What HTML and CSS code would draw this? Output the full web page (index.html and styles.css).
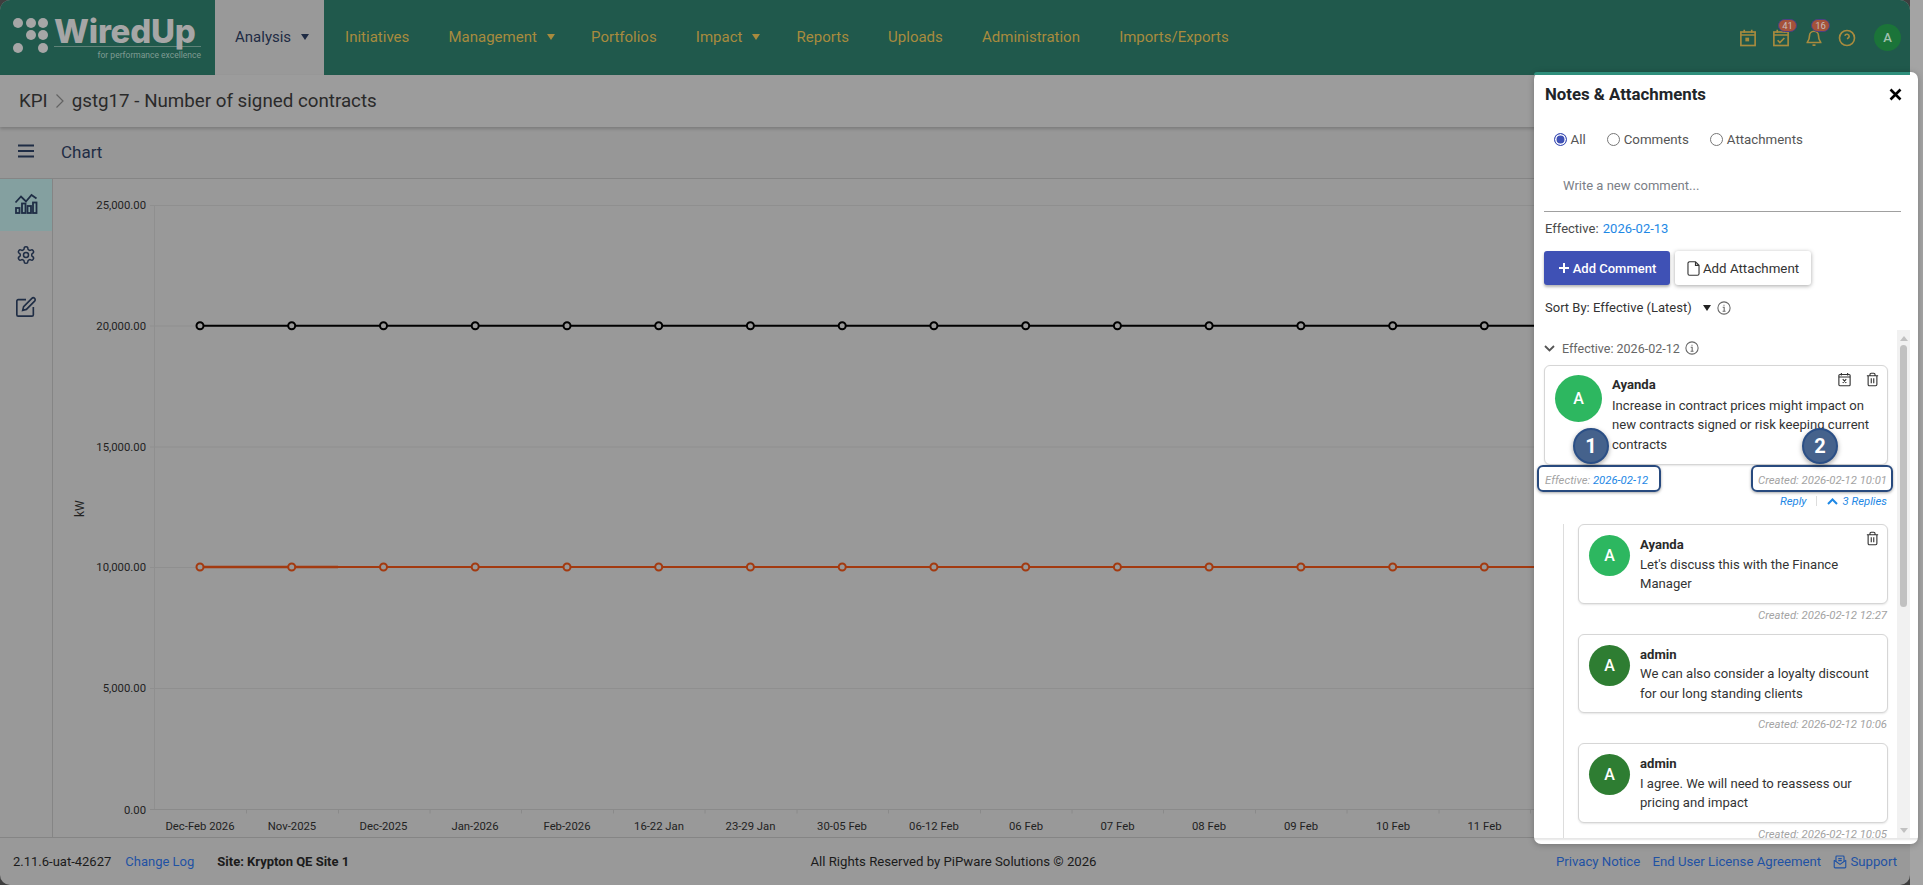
FILE: index.html
```html
<!DOCTYPE html>
<html lang="en">
<head>
<meta charset="utf-8">
<title>KPI - WiredUp</title>
<link rel="stylesheet" href="styles.css">
</head>
<body>
<svg class="defs" width="0" height="0" aria-hidden="true">
  <symbol id="i-trash" viewBox="0 0 24 24"><path d="M3 6h18M19 6v14a2 2 0 0 1-2 2H7a2 2 0 0 1-2-2V6M8 6V4a2 2 0 0 1 2-2h4a2 2 0 0 1 2 2v2M10 10v8M14 10v8"/></symbol>
  <symbol id="i-calx" viewBox="0 0 24 24"><rect x="3" y="4" width="18" height="18" rx="1.5"/><path d="M7 1.5v4M17 1.5v4M3 8h18M9.2 11.5l5.6 6M14.8 11.5l-5.6 6"/></symbol>
  <symbol id="i-info" viewBox="0 0 24 24"><circle cx="12" cy="12" r="10.5"/><path d="M12 6.4v1.8M9.8 10.6H12.3V17M9.6 17.4h5" /></symbol>
</svg>
<div class="screen">
  <div class="frame">
    <div class="app">
      <header class="nav">
        <a class="logo">
          <svg class="logo-dots" width="40" height="40" viewBox="0 0 40 40"><circle cx="7" cy="7" r="5"/><circle cx="20" cy="7" r="5"/><circle cx="32" cy="7" r="5"/><circle cx="20" cy="19" r="5"/><circle cx="32" cy="19" r="5"/><circle cx="7" cy="32" r="5"/><circle cx="32" cy="32" r="5"/></svg>
          <div class="logo-text">
            <div class="logo-name">WiredUp</div>
            <div class="logo-tag">for performance excellence</div>
          </div>
        </a>
        <nav class="menu">
          <a class="menu-item active">Analysis<span class="caret"></span></a>
          <a class="menu-item">Initiatives</a>
          <a class="menu-item">Management<span class="caret"></span></a>
          <a class="menu-item">Portfolios</a>
          <a class="menu-item">Impact<span class="caret"></span></a>
          <a class="menu-item">Reports</a>
          <a class="menu-item">Uploads</a>
          <a class="menu-item">Administration</a>
          <a class="menu-item">Imports/Exports</a>
        </nav>
        <div class="tools">
          <span class="tool"><svg viewBox="0 0 24 24" width="18" height="18"><rect x="2.5" y="4" width="19" height="18"/><path d="M7 1v4M17 1v4M2.5 8h19"/><rect class="solid" x="8.5" y="11.5" width="5" height="5"/></svg></span>
          <span class="tool"><svg viewBox="0 0 24 24" width="18" height="18"><rect x="2.5" y="4" width="19" height="18"/><path d="M7 1v4M17 1v4M2.5 8h19M7.5 15l3 3 6-6"/></svg><b class="badge">41</b></span>
          <span class="tool"><svg viewBox="0 0 24 24" width="18" height="18"><path d="M6 9a6 6 0 0 1 12 0c0 6 3 8 3 9H3c0-1 3-3 3-9M10 21.5h4"/></svg><b class="badge">16</b></span>
          <span class="tool"><svg viewBox="0 0 24 24" width="18" height="18"><circle cx="12" cy="12" r="10"/><path d="M9.09 9a3 3 0 0 1 5.83 1c0 2-3 3-3 3M12 17h.01"/></svg></span>
          <span class="user">A</span>
        </div>
      </header>

      <div class="crumbs">
        <span>KPI</span>
        <svg class="crumb-sep" width="10" height="16" viewBox="0 0 10 16"><path d="M1.5 1.5 8 8l-6.5 6.5"/></svg>
        <span>gstg17 - Number of signed contracts</span>
      </div>

      <div class="subbar">
        <svg class="burger" width="18" height="14" viewBox="0 0 18 14"><path d="M1 1.5h16M1 7h16M1 12.500h16"/></svg>
        <span class="subbar-title">Chart</span>
      </div>

      <div class="workspace">
        <aside class="side">
          <a class="side-item active"><svg viewBox="0 0 24 24" width="24" height="24"><path d="M1.500 11.500 7 5.500l5 5 5.500-6.500 5 3.500"/><rect x="2" y="17" width="3.500" height="5"/><rect x="8" y="12.500" width="3.500" height="9.500"/><rect x="13.500" y="15" width="3.500" height="7"/><rect x="19" y="11.500" width="3.500" height="10.500"/></svg></a>
          <a class="side-item"><svg viewBox="0 0 24 24" width="20" height="20"><path d="M12.220 2h-.44a2 2 0 0 0-2 2v.18a2 2 0 0 1-1 1.730l-.43.25a2 2 0 0 1-2 0l-.15-.08a2 2 0 0 0-2.730.73l-.22.38a2 2 0 0 0 .73 2.730l.15.1a2 2 0 0 1 1 1.720v.51a2 2 0 0 1-1 1.740l-.15.09a2 2 0 0 0-.73 2.730l.22.38a2 2 0 0 0 2.730.73l.15-.08a2 2 0 0 1 2 0l.43.25a2 2 0 0 1 1 1.730V20a2 2 0 0 0 2 2h.44a2 2 0 0 0 2-2v-.18a2 2 0 0 1 1-1.730l.43-.25a2 2 0 0 1 2 0l.15.08a2 2 0 0 0 2.730-.73l.22-.39a2 2 0 0 0-.73-2.730l-.15-.08a2 2 0 0 1-1-1.740v-.5a2 2 0 0 1 1-1.740l.15-.09a2 2 0 0 0 .73-2.730l-.22-.38a2 2 0 0 0-2.730-.73l-.15.08a2 2 0 0 1-2 0l-.43-.25a2 2 0 0 1-1-1.730V4a2 2 0 0 0-2-2z"/><circle cx="12" cy="12" r="3"/></svg></a>
          <a class="side-item"><svg viewBox="0 0 24 24" width="22" height="22"><path d="M12 4H3.500a1.500 1.500 0 0 0-1.500 1.500v15A1.500 1.500 0 0 0 3.500 22h15a1.500 1.500 0 0 0 1.500-1.500V12"/><path d="M18.400 2.600a2 2 0 0 1 3 3l-9 9-4 1 1-4z"/></svg></a>
        </aside>
        <main class="chart">
          <svg class="chart-svg" viewBox="53 179 1857 658" width="1857" height="658">
            <g class="grid">
              <path d="M150 205.500H1534M150 326H1534M150 447H1534M150 567.500H1534M150 688.500H1534"/>
              <path d="M154.500 205V809.500"/>
              <path class="axis" d="M150 809.500H1534M246.500 809.500v4M338.500 809.500v4M430 809.500v4M521.500 809.500v4M613.500 809.500v4M705 809.500v4M797 809.500v4M888.500 809.500v4M980.500 809.500v4M1072 809.500v4M1163.500 809.500v4M1255.500 809.500v4M1347 809.500v4M1439 809.500v4M1530.500 809.500v4"/>
            </g>
            <g class="y-labels">
              <text x="146" y="209">25,000.00</text>
              <text x="146" y="330">20,000.00</text>
              <text x="146" y="451">15,000.00</text>
              <text x="146" y="571">10,000.00</text>
              <text x="146" y="692">5,000.00</text>
              <text x="146" y="814">0.00</text>
            </g>
            <text class="unit" transform="translate(84 517) rotate(-90)">kW</text>
            <g class="x-labels">
              <text x="200" y="830">Dec-Feb 2026</text><text x="292" y="830">Nov-2025</text><text x="383.500" y="830">Dec-2025</text><text x="475" y="830">Jan-2026</text><text x="567" y="830">Feb-2026</text><text x="659" y="830">16-22 Jan</text><text x="750.500" y="830">23-29 Jan</text><text x="842" y="830">30-05 Feb</text><text x="934" y="830">06-12 Feb</text><text x="1026" y="830">06 Feb</text><text x="1117.500" y="830">07 Feb</text><text x="1209" y="830">08 Feb</text><text x="1301" y="830">09 Feb</text><text x="1393" y="830">10 Feb</text><text x="1484.500" y="830">11 Feb</text>
            </g>
            <path class="line-black" d="M200 325.700H1536"/>
            <g class="dots-black">
              <circle cx="200" cy="325.700" r="3.500"/><circle cx="291.700" cy="325.700" r="3.500"/><circle cx="383.500" cy="325.700" r="3.500"/><circle cx="475.200" cy="325.700" r="3.500"/><circle cx="567" cy="325.700" r="3.500"/><circle cx="658.700" cy="325.700" r="3.500"/><circle cx="750.400" cy="325.700" r="3.500"/><circle cx="842.200" cy="325.700" r="3.500"/><circle cx="933.900" cy="325.700" r="3.500"/><circle cx="1025.700" cy="325.700" r="3.500"/><circle cx="1117.400" cy="325.700" r="3.500"/><circle cx="1209.100" cy="325.700" r="3.500"/><circle cx="1300.900" cy="325.700" r="3.500"/><circle cx="1392.700" cy="325.700" r="3.500"/><circle cx="1484.300" cy="325.700" r="3.500"/>
            </g>
            <path class="line-red" d="M200 567H338"/>
            <path class="line-red thin" d="M338 567H1536"/>
            <g class="dots-red">
              <circle cx="200" cy="567" r="3.500"/><circle cx="291.700" cy="567" r="3.500"/><circle cx="383.500" cy="567" r="3.500"/><circle cx="475.200" cy="567" r="3.500"/><circle cx="567" cy="567" r="3.500"/><circle cx="658.700" cy="567" r="3.500"/><circle cx="750.400" cy="567" r="3.500"/><circle cx="842.200" cy="567" r="3.500"/><circle cx="933.900" cy="567" r="3.500"/><circle cx="1025.700" cy="567" r="3.500"/><circle cx="1117.400" cy="567" r="3.500"/><circle cx="1209.100" cy="567" r="3.500"/><circle cx="1300.900" cy="567" r="3.500"/><circle cx="1392.700" cy="567" r="3.500"/><circle cx="1484.300" cy="567" r="3.500"/>
            </g>
          </svg>
        </main>
      </div>

      <footer class="footer">
        <div class="foot-left">
          <span>2.11.6-uat-42627</span>
          <a class="foot-link">Change Log</a>
          <b>Site: Krypton QE Site 1</b>
        </div>
        <div class="foot-mid">All Rights Reserved by PiPware Solutions © 2026</div>
        <div class="foot-right">
          <a class="foot-link">Privacy Notice</a>
          <a class="foot-link">End User License Agreement</a>
          <a class="foot-link support"><svg width="14" height="15" viewBox="0 0 24 26"><path d="M2 11v11.500a1.500 1.500 0 0 0 1.500 1.500h17a1.500 1.500 0 0 0 1.500-1.500V11"/><path d="M2 11l10 7 10-7"/><path d="M5 13V5a1.500 1.500 0 0 1 1.500-1.500h11A1.500 1.500 0 0 1 19 5v8M9 8h6M9 11.500h6"/></svg>Support</a>
        </div>
      </footer>
    </div>
  </div>
  <div class="strip"></div>
</div>

<section class="panel">
  <div class="accent"></div>
  <div class="panel-head">
    <h2 class="panel-title">Notes &amp; Attachments</h2>
    <svg class="close" width="13" height="13" viewBox="0 0 13 13"><path d="M1.500 1.500l10 10M11.500 1.500l-10 10"/></svg>
  </div>
  <div class="radios">
    <label class="radio"><span class="dot on"></span>All</label>
    <label class="radio"><span class="dot"></span>Comments</label>
    <label class="radio"><span class="dot"></span>Attachments</label>
  </div>
  <div class="new-comment">Write a new comment...</div>
  <div class="effective">Effective: <a class="date gap">2026-02-13</a></div>
  <div class="buttons">
    <a class="btn primary"><svg width="12" height="12" viewBox="0 0 12 12"><path d="M6 1v10M1 6h10"/></svg>Add Comment</a>
    <a class="btn plain"><svg width="13" height="15" viewBox="0 0 16 19"><path d="M10.500 1H3a2 2 0 0 0-2 2v13a2 2 0 0 0 2 2h10a2 2 0 0 0 2-2V5.500zM10.500 1v4.500H15"/></svg>Add Attachment</a>
  </div>
  <div class="sort">
    <span>Sort By: Effective (Latest)</span>
    <span class="sort-caret"></span>
    <svg class="ico info"><use href="#i-info"/></svg>
  </div>
  <div class="list-wrap">
    <div class="list">
      <div class="group-head">
        <svg class="chev" width="11" height="7" viewBox="0 0 11 7"><path d="M1 1l4.500 4.500L10 1"/></svg>
        <span>Effective: 2026-02-12</span>
        <svg class="ico info small"><use href="#i-info"/></svg>
      </div>
      <article class="card">
        <span class="avatar big light">A</span>
        <div class="card-body">
          <div class="name">Ayanda</div>
          <div class="text">Increase in contract prices might impact on new contracts signed or risk keeping current contracts</div>
        </div>
        <div class="card-actions">
          <svg class="ico"><use href="#i-calx"/></svg>
          <svg class="ico"><use href="#i-trash"/></svg>
        </div>
      </article>
      <div class="meta">
        <span>Effective: <a class="date">2026-02-12</a></span>
        <span>Created: 2026-02-12 10:01</span>
      </div>
      <div class="reply-row">
        <a class="date">Reply</a>
        <span class="reply-sep"></span>
        <svg class="chev up" width="11" height="7" viewBox="0 0 11 7"><path d="M1 6l4.500-4.500L10 6"/></svg>
        <a class="date">3 Replies</a>
      </div>
      <div class="thread">
        <article class="card small">
          <span class="avatar light">A</span>
          <div class="card-body">
            <div class="name">Ayanda</div>
            <div class="text">Let's discuss this with the Finance Manager</div>
          </div>
          <div class="card-actions"><svg class="ico"><use href="#i-trash"/></svg></div>
        </article>
        <div class="created">Created: 2026-02-12 12:27</div>
        <article class="card small">
          <span class="avatar dark">A</span>
          <div class="card-body">
            <div class="name">admin</div>
            <div class="text">We can also consider a loyalty discount for our long standing clients</div>
          </div>
        </article>
        <div class="created">Created: 2026-02-12 10:06</div>
        <article class="card small">
          <span class="avatar dark">A</span>
          <div class="card-body">
            <div class="name">admin</div>
            <div class="text">I agree. We will need to reassess our pricing and impact</div>
          </div>
        </article>
        <div class="created">Created: 2026-02-12 10:05</div>
      </div>
      <div class="mark-box one"></div>
      <div class="mark-box two"></div>
      <span class="marker one">1</span>
      <span class="marker two">2</span>
    </div>
    <div class="scrollbar">
      <span class="arrow-up"></span>
      <span class="thumb"></span>
      <span class="arrow-down"></span>
    </div>
  </div>
  <div class="panel-foot"></div>
</section>
</body>
</html>
```

FILE: styles.css
```css
* { box-sizing: border-box; }
html, body { margin: 0; height: 885px; overflow: hidden; }
body { font-family: Roboto, "Liberation Sans", sans-serif; font-size: 13px; color: #222; background: #a4a4a4; position: relative; }
.defs { position: absolute; }
a { text-decoration: none; }
svg { fill: none; stroke: currentColor; display: block; }

.screen { display: flex; width: 1923px; height: 885px; }
.frame { flex: 0 0 1910px; background: #3e3e3e; }
.strip { flex: 1; background: #a4a4a4; }
.app { height: 885px; display: flex; flex-direction: column; background: #999; border-radius: 10px; overflow: hidden; }

/* Top navigation */
.nav { height: 75px; flex: none; display: flex; background: #20594c; }
.logo { width: 215px; flex: none; display: flex; padding: 16px 0 0 11px; color: #a6a6a6; }
.logo-dots { fill: #a6a6a6; stroke: none; width: 40px; height: 40px; flex: none; }
.logo-text { margin-left: 3px; width: 147px; }
.logo-name { font-family: Inter, "Open Sans", sans-serif; font-weight: 800; font-size: 33px; line-height: 30px; letter-spacing: -.2px; border-bottom: 1px solid #5f8378; height: 31px; white-space: nowrap; }
.logo-tag { font-size: 8.5px; line-height: 17px; text-align: right; color: #7f9b92; white-space: nowrap; }
.menu { display: flex; flex: 1; }
.menu-item { display: flex; align-items: center; padding: 0 19.600px 2px; font-size: 15px; color: #a88b3e; }
.menu-item.active { background: #999; color: #1e2b44; padding-left: 20px; padding-right: 18px; }
.menu-item.active + .menu-item { padding-left: 21px; }
.caret { width: 0; height: 0; margin: 0 -3px 0 10px; border: 4px solid transparent; border-top: 6px solid currentColor; border-bottom: 0; }
.tools { display: flex; align-items: center; padding-right: 9px; color: #a88b3e; }
.tool { position: relative; width: 33px; display: flex; justify-content: center; }
.tool svg { stroke-width: 2.200; }
.tool .solid { fill: currentColor; stroke: none; }
.badge { position: absolute; left: 14px; top: -10px; width: 19px; height: 13px; border-radius: 7px; background: #a5523a; border: 1px solid #4b3f86; color: #c9bdb8; font-size: 9.500px; line-height: 11px; text-align: center; font-weight: 400; }
.user { width: 27px; height: 27px; margin-left: 11px; border-radius: 50%; background: #1b7439; color: #9fc0ae; font-size: 13px; font-weight: 500; line-height: 27px; text-align: center; }

/* Breadcrumb and sub bar */
.crumbs { height: 52px; flex: none; display: flex; align-items: center; gap: 8px; padding: 0 0 1px 19px; background: #9c9c9c; color: #2a2a2a; font-size: 18.750px; box-shadow: 0 2px 3px rgba(0,0,0,.18); position: relative; }
.crumb-sep { stroke: #626262; stroke-width: 1.200; margin: 0 -1px; }
.subbar { height: 52px; flex: none; display: flex; align-items: center; padding: 0 0 2px 17px; background: #979797; border-bottom: 1px solid #858585; color: #1f2d45; }
.burger { stroke-width: 2; stroke: #1f2d45; margin-bottom: 2px; }
.subbar-title { margin-left: 26px; font-size: 17px; }

/* Work area */
.workspace { flex: 1; display: flex; min-height: 0; }
.side { width: 53px; flex: none; border-right: 1px solid #858585; color: #1f2d45; }
.side-item { height: 52px; display: flex; align-items: center; justify-content: center; padding-bottom: 4px; }
.side-item svg { stroke-width: 1.800; }
.side-item.active { background: #84a0a0; padding-bottom: 5px; }
.chart { flex: 1; min-width: 0; overflow: hidden; }
.chart-svg { stroke: none; }
.grid path { stroke: #8f8f8f; stroke-width: 1; }
.grid .axis { stroke: #8a8a8a; }
.y-labels text { text-anchor: end; font-size: 11.300px; fill: #222; stroke: none; }
.x-labels text { text-anchor: middle; font-size: 11.300px; fill: #222; stroke: none; }
.unit { font-size: 12px; fill: #222; stroke: none; }
.line-black { stroke: #000; stroke-width: 2; }
.dots-black circle { stroke: #000; stroke-width: 2; fill: #999; }
.line-red { stroke: #a33a10; stroke-width: 2.500; }
.line-red.thin { stroke-width: 2.100; }
.dots-red circle { stroke: #a33a10; stroke-width: 2; fill: #999; }

/* Footer */
.footer { height: 48px; flex: none; display: grid; grid-template-columns: 1fr auto 1fr; align-items: center; padding: 0 13px; border-top: 1px solid #858585; color: #1b1b1b; }
.foot-left { display: flex; gap: 14px; }
.foot-left b { margin-left: 9px; font-weight: 700; }
.foot-mid { font-size: 13.200px; margin-left: -3px; }
.foot-right { display: flex; justify-content: flex-end; gap: 12.300px; font-size: 13.200px; }
.foot-link { color: #1f52a4; }
.support { display: flex; align-items: center; gap: 3px; }
.support svg { stroke-width: 2; }

/* Notes panel */
.panel { position: absolute; left: 1534px; top: 72px; width: 384px; height: 772px; display: flex; flex-direction: column; background: #fff; border-radius: 7px; box-shadow: 0 1px 6px rgba(0,0,0,.25); color: #212529; }
.accent { height: 3px; flex: none; margin-right: 8px; background: #2f8f7c; border-radius: 7px 0 0 0; }
.panel-head { height: 38px; flex: none; display: flex; align-items: center; justify-content: space-between; padding: 0 16px 0 11px; }
.panel-title { margin: 0; font-size: 16.800px; font-weight: 700; color: #212529; }
.close { stroke: #000; stroke-width: 2.600; }
.radios { height: 52px; flex: none; display: flex; align-items: center; gap: 21.500px; padding-left: 20px; color: #555; font-size: 13.300px; }
.radio { display: flex; align-items: center; gap: 3.500px; }
.dot { width: 13px; height: 13px; border-radius: 50%; border: 1px solid #777; background: #fff; }
.dot.on { border-color: #3f51b5; border-width: 1.500px; box-shadow: inset 0 0 0 1.500px #fff; background: #3f51b5; }
.new-comment { height: 47px; flex: none; margin: 0 17px 0 10px; padding: 0 0 6px 19px; display: flex; align-items: center; border-bottom: 1px solid #a0a0a0; color: #7b8087; font-size: 13px; }
.effective { height: 33px; flex: none; padding-left: 11px; line-height: 33px; color: #4a4a4a; font-size: 13px; }
.date { color: #1e88e5; }
.date.gap { margin-left: 1px; }
.buttons { flex: none; display: flex; gap: 5px; padding: 6px 0 0 10px; }
.btn { height: 34px; display: flex; align-items: center; justify-content: center; gap: 3px; border-radius: 3px; font-size: 13px; }
.btn.primary { width: 126px; background: #3f51b5; color: #fff; font-weight: 500; box-shadow: 0 2px 3px rgba(0,0,0,.3); }
.btn.primary svg { stroke-width: 2; }
.btn.plain { width: 136px; background: #fff; color: #333; font-size: 13.300px; box-shadow: 0 1px 4px rgba(0,0,0,.35); }
.btn.plain svg { stroke-width: 1.400; }
.sort { height: 45px; flex: none; display: flex; align-items: center; padding-left: 11px; color: #333; font-size: 13px; }
.sort-caret { width: 0; height: 0; margin: 0 6px 0 11px; border: 4px solid transparent; border-top: 6px solid #222; border-bottom: 0; }
.ico { width: 15px; height: 15px; stroke: #333; stroke-width: 1.800; }
.info { stroke: #666; width: 14px; height: 14px; }
.list-wrap { flex: 1; min-height: 0; display: flex; padding-right: 8px; }
.list { flex: 1; min-width: 0; position: relative; overflow: hidden; padding: 0 9px 0 10px; }
.group-head { height: 35px; padding: 1px 0 0 0; display: flex; align-items: center; gap: 7px; color: #666; font-size: 12.500px; }
.chev { stroke: #555; stroke-width: 1.800; }
.info.small { margin-left: -2px; }
.card { display: flex; position: relative; border: 1px solid #d6d6d6; border-radius: 6px; background: #fff; padding: 9px 10px 10px 10px; gap: 10px; box-shadow: 0 1px 2px rgba(0,0,0,.1); }
.card.small { padding-top: 10px; padding-bottom: 9px; }
.avatar { flex: none; width: 41px; height: 41px; border-radius: 50%; color: #fff; font-size: 16px; font-weight: 500; display: flex; align-items: center; justify-content: center; }
.avatar.big { width: 47px; height: 47px; }
.avatar.light { background: #2db760; }
.avatar.dark { background: #2e7d32; }
.card-body { flex: 1; min-width: 0; line-height: 19.500px; font-size: 13.100px; color: #333; }
.name { font-weight: 700; color: #2a2a2a; line-height: 20.500px; }
.card.small .name { line-height: 19.500px; }
.text { padding-right: 4px; }
.card-actions { position: absolute; right: 7px; top: 6px; display: flex; gap: 13px; }
.meta { display: flex; justify-content: space-between; height: 26px; padding: 9px 1px 0; color: #a3a3a3; font-size: 11.300px; font-style: italic; line-height: 13px; }
.reply-row { height: 20px; display: flex; justify-content: flex-end; align-items: center; gap: 5px; padding-right: 1px; font-size: 11.300px; font-style: italic; }
.reply-sep { width: 1px; height: 10px; margin: 0 5px 0 4px; background: #ddd; }
.chev.up { stroke: #1e88e5; stroke-width: 2; }
.thread { margin: 13px 0 0 19px; padding: 0 0 60px 14px; border-left: 1px solid #ddd; }
.created { height: 30px; padding: 5px 1px 0 0; text-align: right; color: #a3a3a3; font-size: 11.300px; font-style: italic; line-height: 14px; }
.mark-box { position: absolute; top: 135px; height: 27px; border: 2px solid #284a7e; border-radius: 6px; box-shadow: 0 1px 3px rgba(0,0,0,.35); }
.mark-box.one { left: 3px; width: 124px; }
.mark-box.two { left: 217px; width: 142px; }
.marker { position: absolute; top: 98px; width: 36px; height: 36px; border-radius: 50%; background: #45628c; border: 2px solid #2b4f86; color: #fff; font-size: 20px; font-weight: 700; display: flex; align-items: center; justify-content: center; box-shadow: 0 2px 5px rgba(0,0,0,.35); }
.marker.one { left: 39px; }
.marker.two { left: 268px; }
.scrollbar { flex: none; width: 13px; background: #f1f1f1; display: flex; flex-direction: column; align-items: center; position: relative; }
.arrow-up { width: 0; height: 0; margin-top: 6px; border: 4px solid transparent; border-bottom: 5px solid #c1c1c1; border-top: 0; }
.thumb { width: 7px; height: 262px; margin-top: 4px; border-radius: 4px; background: #c1c1c1; }
.arrow-down { position: absolute; bottom: 5px; width: 0; height: 0; border: 4px solid transparent; border-top: 5px solid #c1c1c1; border-bottom: 0; }
.panel-foot { height: 6px; flex: none; box-shadow: inset 0 2px 2px rgba(0,0,0,.1); border-radius: 0 0 7px 7px; }
```
